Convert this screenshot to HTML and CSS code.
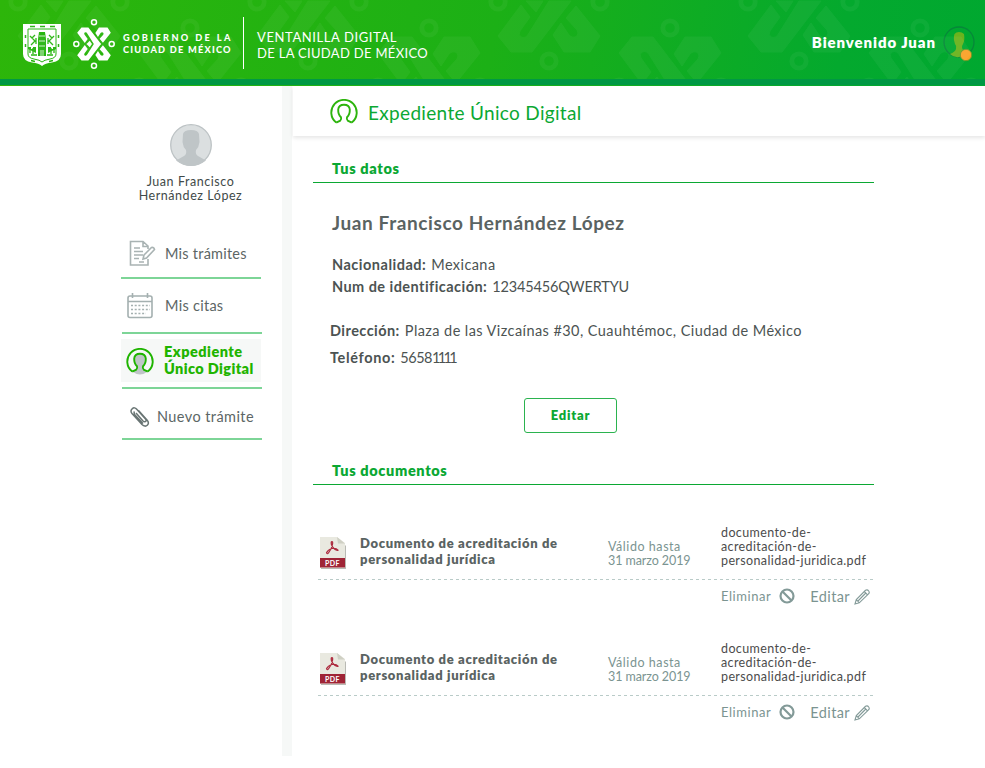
FILE: index.html
```html
<!DOCTYPE html>
<html lang="es">
<head>
<meta charset="utf-8">
<title>Expediente Único Digital</title>
<link rel="stylesheet" href="styles.css">
</head>
<body>
<svg class="defs" width="0" height="0" aria-hidden="true">
  <defs>
    <g id="half">
      <path d="M22-1L-17 50H-38L-51 34L-28 3L-19 15L-29 29Q-31 33-28 35Q-23 37-20 31L0-1Z"/>
      <path d="M27 4L51 34L41 50H15L4 33L12 21L20 33Q24 37 28 34Q30 31 28 28L17 16Z"/>
      <path d="M-23-1H-6L-13 10Z"/>
    </g>
    <circle id="ring" r="7.2" fill="none" stroke-width="4.8"/>
    <g id="tile">
      <use href="#half"/><use href="#ring" x="-51"/><use href="#ring" x="51"/><use href="#ring" y="59"/>
      <g transform="translate(121 85)"><use href="#half" transform="scale(1 -1)"/><use href="#ring" y="-59"/><use href="#ring" x="-51"/><use href="#ring" x="51"/></g>
    </g>
    <g id="person">
      <path d="M6.200 23.600A12.700 12.700 0 1 1 21.800 23.600"/>
      <path d="M6.200 23.600L10.300 21.600Q11.700 20.500 11 18.300Q8 15.500 8.200 10.500Q8.600 5.700 14 5.700T19.800 10.500Q20 15.500 17 18.300Q16.300 20.500 17.700 21.600L21.800 23.600"/>
    </g>
    <path id="bust" d="M6 36.500L14 32Q17 30 16 26Q13 23 12.500 18L13 10Q14 6 21 6T29 10L29.500 18Q29 23 26 26Q25 30 28 32L36 36.500Q29 42 21 42T6 36.500Z"/>
    <g id="pdf">
      <path d="M1 1H18L26 9V32H1Z" fill="#b9bab4"/>
      <path d="M0 0H17L25 6V31H0Z" fill="#e9e9e0"/><path d="M17 0L25 6.500H18Z" fill="#cfd0c4"/>
      <path d="M0 21H25V30.500H0Z" fill="#9f2436"/>
      <path d="M6.500 15.700Q8 12.500 12 11.500T18 13.200Q16.500 14.500 13 10.500Q10.500 7 11.400 4.700Q13.200 4 12.500 7.500Q11.500 12.500 8.500 15.800Q7 17.700 6.500 15.700Z" fill="none" stroke="#ad2b3e" stroke-width="1.200"/>
      <text x="12.500" y="28.500" text-anchor="middle" class="pdf-label">PDF</text>
    </g>
    <g id="ban" fill="none" stroke-width="2.200"><circle cx="8" cy="8" r="6.500"/><path d="M3.500 3.500L12.500 12.500"/></g>
    <g id="pencil" fill="none" stroke-width="1.100"><path d="M1 15L2.300 10.500L11.500 1.300Q13.500 .3 14.700 2T14.500 4.800L5.300 13.800ZM2.300 10.500L5.300 13.800M10.300 2.500L13.300 5.700M4 12L11.800 4"/></g>
  </defs>
</svg>
<header class="top">
  <svg class="pattern" width="985" height="79"><use href="#tile" x="69" y="2"/><use href="#tile" x="308" y="2"/><use href="#tile" x="549" y="2"/><use href="#tile" x="799" y="2"/></svg>
  <svg class="shield" width="38" height="43" viewBox="0 0 38 43">
    <path d="M0 0H38V30Q38 37 29 38.500Q22 39 19 42Q16 39 9 38.500Q0 37 0 30Z" fill="#fff"/>
    <path d="M5 5H33V30Q33 34 27 35Q21 36 19 38Q17 36 11 35Q5 34 5 30Z" fill="none" stroke="#27b50f" stroke-width="1"/>
    <path d="M15 15L16 8H22L23 15V32H15ZM5 25V23H8V25H10V23H13V29M25 29V23H28V25H30V23H33V25" fill="#27b50f"/>
    <path d="M16 12H22M16 17H22M16 22H22M18 26V32M20 26V32" stroke="#fff" stroke-width=".8"/>
    <path d="M7 29V24M10 30V24M28 30V24M31 29V24M7 12L12 17L8 21M12 11L9 14M13 14V20M31 12L26 17L30 21M26 11L29 14M25 14V20M8 31H14M24 31H30" fill="none" stroke="#27b50f" stroke-width="1.300"/>
    <path d="M7 2.500H12M17 2.500H22M27 2.500H32M2.500 11V14M2.500 20V23M35.500 11V14M35.500 20V23M8 36.500L12 37.500M30 36.500L26 37.500" stroke="#27b50f" stroke-width="1.500"/>
  </svg>
  <svg class="emblem" width="44" height="52" viewBox="-22 -26 44 52"><g transform="scale(.33)" fill="#fff"><use href="#half"/><use href="#half" transform="scale(1 -1)"/></g><g class="dots"><circle cx="-17.700" r="2.500"/><circle cx="17.700" r="2.500"/><circle cy="-21.700" r="2.500"/><circle cy="21.700" r="2.500"/></g></svg>
  <div class="gov"><span class="g1">GOBIERNO DE LA</span><span class="g2">CIUDAD DE MÉXICO</span></div>
  <div class="site"><span class="s1">VENTANILLA DIGITAL</span><span class="s2">DE LA CIUDAD DE MÉXICO</span></div>
  <div class="welcome">Bienvenido Juan</div>
  <svg class="user" width="34" height="36" viewBox="0 0 34 36"><circle cx="16" cy="16" r="15" fill="none" stroke="#07873a" stroke-width="1.300"/><path d="M7 28Q12 26 13 23Q14 20 12 18Q10 12 11.500 8Q13 6 16 6T21 8Q22 14 20 18Q18 21 20 24V30Q12 33 7 28Z" fill="#6bb31d"/><circle cx="23" cy="29" r="5.700" fill="#f9a228" stroke="#6d9a28" stroke-width="1"/></svg>
</header>
<div class="layout">
  <aside class="side">
    <svg class="avatar" width="42" height="42" viewBox="0 0 42 42"><circle cx="21" cy="21" r="20.300" fill="#dbdfe0" stroke="#bcc2c4" stroke-width="1.300"/><use href="#bust" fill="#bfc5c7"/></svg>
    <div class="who"><span class="w1">Juan Francisco</span><span class="w2">Hernández López</span></div>
    <nav class="nav">
      <a class="item tramites"><svg width="28" height="27" viewBox="0 0 28 27" fill="none" stroke="#a9b3b3" stroke-width="1.600"><path d="M19 9V6L14 1.500H1.500V25H19V19M14 1.500V6.500H19M5 8H11M5 11.500H14M5 15H14M5 18.500H10M10 22H15M15 15L22.500 7.500Q25 7 25.500 9.500L17.500 18L14 19Z"/></svg><span>Mis trámites</span></a>
      <a class="item citas"><svg width="26" height="26" viewBox="0 0 26 26" fill="none" stroke="#a4b0b0" stroke-width="1.600"><rect x="1" y="3" width="24" height="21.500" rx="2"/><path d="M1 8.500H25M5.500 0V5M20.500 0V5"/><path d="M4 12.500H23M4 16.500H23M4 20.500H19" stroke-dasharray="2 1.700"/></svg><span>Mis citas</span></a>
      <a class="item active"><div class="pill"><svg width="28" height="28" viewBox="0 0 28 28"><path d="M6.200 23.600L10.300 21.600Q11.700 20.500 11 18.300Q8 15.500 8.200 10.500Q8.600 5.700 14 5.700T19.800 10.500Q20 15.500 17 18.300Q16.300 20.500 17.700 21.600L21.800 23.600Q14 29.500 6.200 23.600Z" fill="#bfc5c7"/><use href="#person" fill="none" stroke="#1fb400" stroke-width="1.900"/></svg><div><span class="a1">Expediente</span><span class="a2">Único Digital</span></div></div></a>
      <a class="item nuevo"><svg width="20" height="22" viewBox="0 0 20 22" fill="none" stroke="#687473" stroke-width="1.500"><path d="M6 7L13 15Q15 16.500 16 15Q16.500 14 15.500 13L7 3.500Q4.500 .5 2 3Q0 5 2 7.500L12 18.500Q15 21.500 17.500 19Q19.500 17 17 14L8.500 4.500M4.500 5.500Q3.500 7 5 9L13 17.500"/></svg><span>Nuevo trámite</span></a>
    </nav>
  </aside>
  <div class="band"></div>
  <main class="main">
    <div class="head"><svg width="28" height="28" viewBox="0 0 28 28"><use href="#person" fill="none" stroke="#2db40d" stroke-width="1.900"/></svg><h1>Expediente Único Digital</h1></div>
    <div class="content">
      <h2 class="sec">Tus datos</h2>
      <h3 class="name">Juan Francisco Hernández López</h3>
      <p class="row nac"><b>Nacionalidad:</b><span>Mexicana</span></p>
      <p class="row num"><b>Num de identificación:</b><span>12345456QWERTYU</span></p>
      <p class="row dir"><b>Dirección:</b><span>Plaza de las Vizcaínas #30, Cuauhtémoc, Ciudad de México</span></p>
      <p class="row tel"><b>Teléfono:</b><span>5658<i>1111</i></span></p>
      <button class="edit">Editar</button>
      <h2 class="sec docs">Tus documentos</h2>
      <article class="doc">
        <div class="info"><svg width="27" height="33" viewBox="0 0 27 33"><use href="#pdf"/></svg>
          <div class="kind"><span>Documento de acreditación de</span><span>personalidad jurídica</span></div>
          <div class="valid"><span class="v1">Válido hasta</span><span class="v2">31 marzo 2019</span></div>
          <div class="file"><span>documento-de-</span><span>acreditación-de-</span><span>personalidad-juridica.pdf</span></div></div>
        <div class="actions"><span class="del">Eliminar</span><svg width="16" height="16" stroke="#839a98"><use href="#ban"/></svg><span class="mod">Editar</span><svg width="16" height="16" stroke="#839a98"><use href="#pencil"/></svg></div>
      </article>
      <article class="doc">
        <div class="info"><svg width="27" height="33" viewBox="0 0 27 33"><use href="#pdf"/></svg>
          <div class="kind"><span>Documento de acreditación de</span><span>personalidad jurídica</span></div>
          <div class="valid"><span class="v1">Válido hasta</span><span class="v2">31 marzo 2019</span></div>
          <div class="file"><span>documento-de-</span><span>acreditación-de-</span><span>personalidad-juridica.pdf</span></div></div>
        <div class="actions"><span class="del">Eliminar</span><svg width="16" height="16" stroke="#839a98"><use href="#ban"/></svg><span class="mod">Editar</span><svg width="16" height="16" stroke="#839a98"><use href="#pencil"/></svg></div>
      </article>
    </div>
  </main>
</div>
</body>
</html>
```
FILE: styles.css
```css
* { box-sizing: border-box; }
body { margin: 0; background: #fff; color: #4c5352; font-family: Lato, "Open Sans", sans-serif; font-size: 14px; }
h1, h2, h3, p { margin: 0; font-weight: inherit; }
span, b, h1, h2, h3, .welcome { white-space: nowrap; }
.defs { position: absolute; }
.top { position: relative; display: flex; align-items: flex-start; height: 86px; padding-left: 23px; color: #fff; background: linear-gradient(#009844, #009844) 0 79px / 100% 6px no-repeat, linear-gradient(100deg, #2db60a 0%, #1cb016 50%, #04a92e 85%, #00a830 100%); }
.pattern { position: absolute; left: 0; top: 0; fill: #fff; stroke: #fff; opacity: .045; }
.pattern path { stroke: none; }
.shield { margin-top: 24px; }
.emblem { margin: 18px 0 0 11px; }
.dots { fill: none; stroke: #fff; stroke-width: 1.5; }
.gov { display: flex; flex-direction: column; margin: 32px 0 0 7px; width: 120px; font-size: 9.2px; font-weight: 900; line-height: 12px; }
.g1 { letter-spacing: 2.36px; }
.g2 { letter-spacing: 1.24px; }
.site { display: flex; flex-direction: column; height: 52px; margin-top: 17px; padding: 12px 0 0 13px; border-left: 1px solid #fff; font-size: 13px; line-height: 16px; }
.s1 { letter-spacing: .6px; }
.s2 { letter-spacing: .32px; }
.welcome { margin: 32px 7px 0 auto; font-size: 15px; font-weight: 800; line-height: 20px; letter-spacing: .92px; }
.user { margin: 26px 8px 0 0; }
.layout { display: flex; height: 670px; }
.side { width: 282px; padding-left: 121px; }
.avatar { display: block; margin: 38px 0 0 49px; }
.who { display: flex; flex-direction: column; align-items: center; width: 139px; margin-top: 9px; font-size: 12.5px; line-height: 14px; letter-spacing: .55px; color: #3f4a49; }
.nav { width: 141px; margin-top: 27px; color: #5c6665; font-size: 14.5px; }
.item { display: flex; align-items: center; width: 140px; border-bottom: 2px solid #7dd597; }
.tramites { height: 49px; padding-left: 8px; letter-spacing: .24px; }
.tramites span { margin-left: 8px; }
.citas { height: 55px; margin-left: 1px; padding-left: 5px; letter-spacing: .28px; }
.citas span { margin-left: 12px; }
.active { height: 55px; margin-left: 1px; }
.pill { display: flex; align-items: center; width: 140px; height: 43px; margin-left: -1px; padding-left: 5px; background: #f6f8f7; color: #1fb400; font-weight: 800; line-height: 17px; }
.pill svg { margin-top: 2px; }
.pill div { display: flex; flex-direction: column; margin: -1px 0 0 10px; }
.a1 { letter-spacing: .48px; }
.a2 { letter-spacing: .38px; }
.nuevo { height: 51px; margin-left: 1px; padding: 5px 0 0 8px; letter-spacing: .42px; }
.nuevo svg { margin-top: 2px; }
.nuevo span { margin-left: 7px; }
.band { width: 10px; background: #f6f8f7; }
.main { flex: 1; }
.head { display: flex; align-items: center; height: 50px; margin-left: 1px; padding-left: 37px; box-shadow: 0 2px 4px rgba(0,0,0,.1); }
.head svg { margin-top: 3px; }
.head h1 { margin: 2px 0 0 10px; color: #0ba833; font-size: 19px; letter-spacing: .32px; }
.content { width: 561px; margin-left: 21px; }
.sec { height: 24px; margin-top: 23px; padding-left: 19px; border-bottom: 1px solid #0ba833; color: #0ba833; font-size: 14.5px; font-weight: 800; line-height: 20px; letter-spacing: .64px; }
.name { margin: 29px 0 20px 19px; color: #5a6362; font-size: 19px; font-weight: 700; line-height: 22px; letter-spacing: .6px; }
.row { display: flex; height: 22px; margin-left: 19px; line-height: 22px; font-size: 14.5px; }
.row b { letter-spacing: .45px; }
.dir { margin: 22px 0 5px 17px; }
.tel { margin-left: 17px; }
.row span { margin-left: 5px; letter-spacing: .42px; }
.nac b { letter-spacing: .5px; }
.num span { letter-spacing: -.15px; }
.tel b { letter-spacing: .65px; }
.tel span { letter-spacing: -.5px; }
.tel i { font-style: normal; letter-spacing: -2.7px; }
.edit { display: block; width: 93px; height: 35px; margin: 29px 0 0 211px; padding: 0 0 1px; border: 1px solid #2bb34f; border-radius: 3px; background: #fff; color: #0ba833; font: 800 13px Lato, sans-serif; letter-spacing: .75px; }
.docs { margin-top: 28px; }
.doc { width: 555px; height: 116px; margin-left: 5px; }
.docs + .doc { margin-top: 41px; }
.info { display: grid; grid-template-columns: 40px 248px 113px 1fr; height: 54px; padding-left: 2px; background: repeating-linear-gradient(90deg, #b9cbc8 0 3px, transparent 3px 6px) 0 100% / 100% 1px no-repeat; font-size: 12.5px; line-height: 14px; }
.info svg { margin-top: 11px; }
.info div { display: flex; flex-direction: column; }
.kind { padding-top: 9px; color: #5a6362; font-size: 13px; font-weight: 800; line-height: 16px; letter-spacing: .66px; }
.valid { padding-top: 14px; color: #7b9491; }
.v1 { letter-spacing: .55px; }
.v2 { letter-spacing: -.08px; }
.file { color: #4c4c4c; letter-spacing: .38px; }
.actions { display: flex; align-items: center; height: 34px; padding: 0 0 2px 403px; color: #7b9491; font-size: 13px; }
.actions svg { margin-left: 8px; }
.del { letter-spacing: .55px; }
.actions .mod { margin-left: 15px; font-size: 14.5px; letter-spacing: .4px; }
.actions .mod + svg { margin: 1px 0 0 4px; }
.pdf-label { fill: #fff; stroke: none; font: 700 7px Lato, sans-serif; letter-spacing: .4px; }
```
